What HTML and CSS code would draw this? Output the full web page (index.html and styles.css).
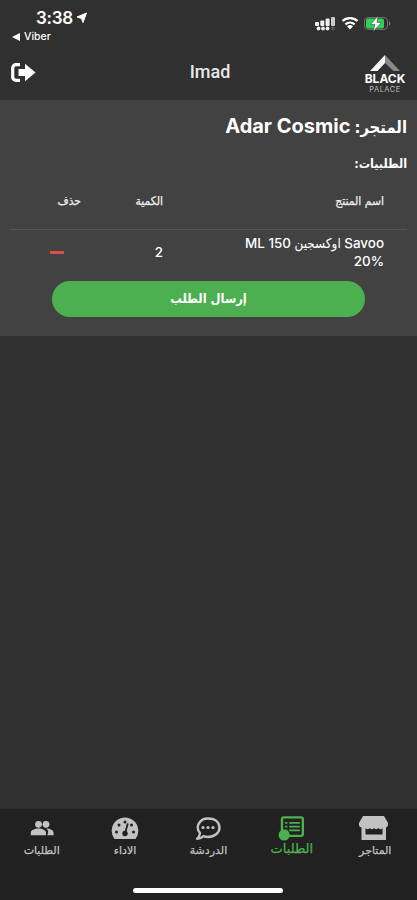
FILE: index.html
```html
<!DOCTYPE html>
<html lang="ar" dir="rtl">
<head>
<meta charset="utf-8">
<title>Black Palace</title>
<link rel="stylesheet" href="styles.css">
</head>
<body>
<div class="screen">
  <div class="status" dir="ltr">
    <div class="status-left">
      <div class="clock"><span>3:38</span>
        <svg width="12" height="12" viewBox="0 0 12 12"><path d="M10.500 1 7 10.500 5.500 6.500 1 5z" fill="#fff" stroke="#fff" stroke-width="1"/></svg>
      </div>
      <div class="back"><svg width="8" height="8" viewBox="0 0 8 8"><path d="M8 0v8L0 4z" fill="#fff"/></svg><span>Viber</span></div>
    </div>
    <div class="status-right">
      <svg width="21" height="16" viewBox="0 0 21 16" fill="#f0f0f0"><rect y="6" width="4" height="4" rx="1"/><rect x="5.300" y="4.500" width="4" height="5.500" rx="1"/><rect x="10.600" y="2.500" width="4" height="7.500" rx="1"/><rect x="16" y="1" width="4" height="9" rx="1" fill="#ccc"/><circle cx="3.500" cy="12.500" r="1.900"/><circle cx="8" cy="12.500" r="1.900"/><circle cx="12.500" cy="12.500" r="1.900"/><circle cx="18" cy="12.500" r="1.900" fill="#555"/></svg>
      <svg width="18" height="14" viewBox="0 0 18 14" fill="none" stroke="#fff" stroke-width="2.300"><path d="M1.500 5a11 11 0 0 1 15 0M4.400 8.300a7 7 0 0 1 9.200 0"/><path d="M6 10.300a4.500 4.500 0 0 1 6 0L9 13.500z" fill="#fff" stroke="none"/></svg>
      <svg width="28" height="16" viewBox="0 0 28 16"><rect x=".5" y="1.500" width="23" height="12" rx="3.500" fill="#303030" stroke="#707070"/><rect x="2" y="2.500" width="18" height="10" rx="2" fill="#31d158"/><path d="M25 5q2.500 2.500 0 5z" fill="#858585"/><path d="M14 0 6.500 8.500H11L9 15.500 17.500 6.500H13z" fill="#fff" stroke="#303030" stroke-width=".5"/></svg>
    </div>
  </div>
  <header class="topbar" dir="ltr">
    <svg class="logout" width="26" height="20" viewBox="0 0 26 20"><path d="M9 1.700H5A3.300 3.300 0 0 0 1.700 5v9A3.300 3.300 0 0 0 5 17.300h4" fill="none" stroke="#fff" stroke-width="3.200"/><path d="M7.500 6H14V.8L24.500 9.500 14 18.300V13H7.500z" fill="#fff"/></svg>
    <h1>Imad</h1>
    <div class="brand">
      <svg width="32" height="17" viewBox="0 0 32 17"><path d="M16 0v8L8.500 16H1z" fill="#f5f5f5"/><path d="M16 0 31 16h-6.500L16 8z" fill="#898989"/></svg>
      <b>BLACK</b><i>PALACE</i>
    </div>
  </header>
  <main class="order">
    <h2><span class="label">المتجر:</span><bdi>Adar Cosmic</bdi></h2>
    <h3>الطلبيات:</h3>
    <div class="row head"><span>اسم المنتج</span><span>الكمية</span><span>حذف</span></div>
    <div class="row item"><span class="product">Savoo اوكسجين 150 ML 20%</span><span class="qty">2</span><span class="remove"><i class="minus"></i></span></div>
    <button class="send">إرسال الطلب</button>
  </main>
  <nav class="tabs" dir="ltr">
    <div class="tab people"><svg width="24" height="24" viewBox="0 0 24 24" fill="#c2c2c2"><circle cx="8.500" cy="7.800" r="3.400"/><circle cx="16" cy="7.800" r="3.400"/><path d="M.8 18.700v-2.500c0-2.600 3.800-4.300 7.700-4.300s7.500 1.700 7.500 4.300v2.500zM17.200 18.700H23.600v-2.500c0-2.500-3.600-4.200-7.100-4.300q2.200 1.800 1.700 4.300z"/></svg><span>الطلبات</span></div>
    <div class="tab perf"><svg width="28" height="24" viewBox="0 0 28 24"><path d="M3.500 22.500a13.300 13.300 0 1 1 21 0z" fill="#c2c2c2"/><g fill="#212121"><circle cx="5.500" cy="15.500" r="1.500"/><circle cx="8" cy="8.500" r="1.500"/><circle cx="14" cy="5.500" r="1.500"/><circle cx="20.500" cy="8.500" r="1.500"/><circle cx="22.500" cy="15.500" r="1.500"/><circle cx="14" cy="17" r="2.700"/></g><path d="m14 17 2.800-10" stroke="#212121" stroke-width="1.800"/></svg><span>الاداء</span></div>
    <div class="tab chat"><svg width="26" height="24" viewBox="0 0 26 24"><path d="M5 16.500C-.5 10 5 2 13 2s11.500 4.300 11.500 9.300-5 9.200-11.500 9.200q-2.500 0-4.500-.8Q5.500 22.500 2 22.300 4.700 20 5 16.500z" fill="none" stroke="#c2c2c2" stroke-width="2.400" stroke-linejoin="round"/><g fill="#c2c2c2"><circle cx="8" cy="11" r="1.600"/><circle cx="13" cy="11" r="1.600"/><circle cx="18" cy="11" r="1.600"/></g></svg><span>الدردشة</span></div>
    <div class="tab orders"><svg width="28" height="27" viewBox="0 0 28 27" fill="none" stroke="#4caf50"><rect x="3.200" y="1.500" width="22.500" height="20" rx="2" stroke-width="2.600"/><path d="M11 7.500H22.500M11 11.500H22.500M11 15.500H22.500M6.500 7.500H9M6.500 11.500H9M6.500 15.500H9" stroke-width="2"/><circle cx="5.500" cy="20.500" r="6" fill="#4caf50" stroke="none"/></svg><span>الطلبات</span></div>
    <div class="tab stores"><svg width="30" height="25" viewBox="0 0 30 25"><path d="M4 0h21l4 7v1.500q0 3-3 3H3q-3 0-3-3V7z" fill="#c2c2c2"/><path d="M2.500 11h24.500v13H2.500zM6.500 12v6.500h17V12q-2 2.500-4.300 0-2 2.500-4.200 0-2 2.500-4.200 0-2 2.500-4.300 0" fill="#c2c2c2" fill-rule="evenodd"/></svg><span>المتاجر</span></div>
    <div class="home"></div>
  </nav>
</div>
</body>
</html>
```
FILE: styles.css
```css
* { box-sizing: border-box; }
body { margin: 0; background: #303030; color: #fff; font-family: Inter, "DejaVu Sans Condensed", "DejaVu Sans", sans-serif; }
svg { display: block; flex: none; }
.screen { width: 417px; height: 900px; display: flex; flex-direction: column; overflow: hidden; }
.status { height: 46px; display: flex; justify-content: space-between; padding: 9px 25px 0 12px; }
.clock { display: flex; align-items: center; gap: 3px; padding-left: 24px; height: 18px; font-size: 17px; font-weight: 600; letter-spacing: -.25px; }
.back { display: flex; align-items: center; gap: 4px; height: 19px; font-size: 10.500px; font-weight: 500; }
.status-right { display: flex; align-items: flex-start; padding-top: 7px; gap: 5px; }
.topbar { height: 54px; display: grid; grid-template-columns: 80px 1fr 80px; padding: 0 8px 0 11px; }
.logout { margin-top: 17px; }
h1 { margin: 15px 0 0; text-align: center; font: 500 18px/22px Roboto, sans-serif; color: #e8e8e8; }
.brand { justify-self: end; width: 48px; padding-top: 9px; display: flex; flex-direction: column; align-items: center; }
.brand b { font: 700 12px/12px Inter, sans-serif; margin-top: 1px; }
.brand i { font: 400 7.500px/8px Inter, sans-serif; letter-spacing: .5px; color: #bbb; margin-top: 1px; }
.order { height: 236px; background: #424242; padding: 0 10px; display: flex; flex-direction: column; }
h2 { margin: 13px 0 0; height: 26px; display: flex; align-items: baseline; gap: 4px; font-size: 20px; line-height: 26px; font-weight: 700; }
.label, h3, .head, .send { font-family: "DejaVu Sans Condensed", "DejaVu Sans", sans-serif; font-stretch: condensed; }
.label { font-size: 16.500px; }
h3 { margin: 15px 0 0; font-size: 12.500px; font-weight: 700; line-height: 20px; }
.row { display: grid; grid-template-columns: 221px 82px 94px; }
.row > span { padding-right: 23px; }
.head { height: 56px; padding-top: 16px; border-bottom: 1px solid #565656; font-size: 12px; line-height: 22px; -webkit-text-stroke: .25px #eee; color: #eee; }
.item { height: 51px; padding-top: 4px; font-size: 13.400px; line-height: 18px; font-weight: 500; }
.product { padding-left: 50px; }
.qty { padding-top: 9px; }
.row .remove { padding: 17px 40px 0 0; }
.minus { display: block; width: 14px; height: 3px; background: #d85045; }
.send { width: 313px; height: 36px; align-self: center; border: 0; border-radius: 18px; background: #4caf50; color: #fff; font-size: 12.800px; font-weight: 700; line-height: 34px; padding: 0; }
.tabs { height: 91px; margin-top: auto; background: #212121; display: grid; grid-template-columns: repeat(5, 83.400px); grid-template-rows: 72px 5px; padding-top: 7px; }
.tab { display: flex; flex-direction: column; align-items: center; color: #c2c2c2; font: 400 11px/16px "DejaVu Sans", sans-serif; -webkit-text-stroke: .25px currentColor; }
.tab span { margin-top: 2px; }
.tab svg { height: 25px; }
.stores svg { margin-right: 3px; }
.orders { color: #4caf50; font-size: 13px; }
.orders span { margin-top: 0; }
.home { grid-column: 1 / -1; justify-self: center; width: 150px; height: 5px; border-radius: 3px; background: #fff; }
```
